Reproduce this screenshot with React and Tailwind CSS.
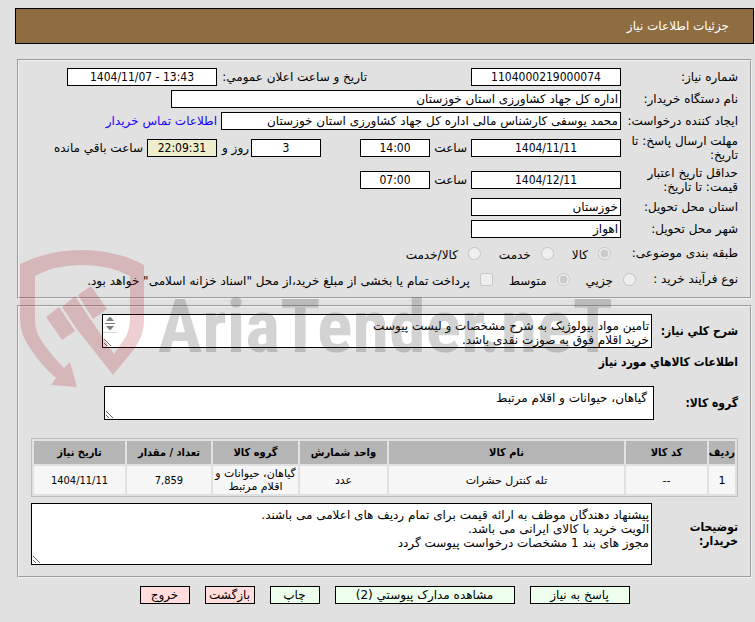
import { useState } from 'react';
import clsx from 'clsx';

const ITEMS = [
  {
    row: '1',
    code: '--',
    name: 'تله کنترل حشرات',
    unit: 'عدد',
    group: 'گیاهان، حیوانات و اقلام مرتبط',
    amount: '7,859',
    date: '1404/11/11',
  },
];

const DESCRIPTION = 'تامین مواد بیولوژیک به شرح مشخصات و لیست پیوست\nخرید اقلام فوق به صوزت نقدی باشد.';

const BUYER_NOTES =
  'پیشنهاد دهندگان موظف به ارائه قیمت برای تمام ردیف های اعلامی می باشند.\nالویت خرید با کالای ایرانی می باشد.\nمجوز های بند 1 مشخصات درخواست پیوست گردد';

function Row({ label, htmlFor, tall, children }) {
  return (
    <div className={clsx('flex items-center', tall ? 'min-h-8' : 'min-h-[22px]')}>
      <label htmlFor={htmlFor} className="w-[117px] shrink-0">
        {label}
      </label>
      {children}
    </div>
  );
}

function Field({ className, numeric, ...props }) {
  return (
    <input
      type="text"
      readOnly
      className={clsx(
        'h-[18px] min-w-0 border border-black px-0.5',
        numeric && "text-center font-['DejaVu_Sans_Condensed','DejaVu_Sans',sans-serif]",
        className
      )}
      {...props}
    />
  );
}

function Choice({ label, type = 'radio', ...props }) {
  return (
    <label className="flex items-center gap-2.5">
      <input type={type} disabled className="m-0 size-[13px]" {...props} />
      <span className="pt-1">{label}</span>
    </label>
  );
}

function Panel({ children, className }) {
  return (
    <fieldset className={clsx('mx-0.5 min-w-0 border-2 border-[#f0f0f0] [border-style:groove]', className)}>
      {children}
    </fieldset>
  );
}

function Watermark() {
  return (
    <div dir="ltr" aria-hidden="true" className="pointer-events-none absolute top-[250px] left-5 flex opacity-20">
      <svg width="126" height="138" viewBox="20 250 126 138" fill="#af141e">
        <path d="M20 264Q48 250 82 250Q116 250 144 265V320Q144 335 135 348L113 375L76 328L62 307L75 296L91 320L114 354L125 338Q130 330 130 318V276Q110 265 82 265Q54 265 35 276V320Q35 332 43 343Q52 356 64 368L70 362L77 387L51 385L56 378Q40 364 30 348Q20 334 20 320Z" />
        <path d="M46 317L59 307L75 331L62 340Z" />
        <path d="M78 295L91 286L107 309L93 319Z" />
      </svg>
      <span className="pt-8 pl-3 font-['Roboto_Condensed','Roboto',sans-serif] text-[74px] leading-[90px] font-bold text-[#282828]">
        AriaTender.neT
      </span>
    </div>
  );
}

export default function App() {
  const [description, setDescription] = useState(DESCRIPTION);
  const [group, setGroup] = useState('گیاهان، حیوانات و اقلام مرتبط');
  const [notes, setNotes] = useState(BUYER_NOTES);

  return (
    <main
      dir="rtl"
      lang="fa"
      className="relative min-h-screen bg-[#e1e1e1] pt-2 pr-px pl-[15px] font-['DejaVu_Sans',sans-serif] text-[12px] leading-[14px] text-black"
    >
      <header className="flex h-9 items-center border border-black bg-[#8f6d40] px-6 text-white">
        <h1>جزئیات اطلاعات نیاز</h1>
      </header>

      <Panel className="mt-[15px] px-3 py-[5px]">
        <Row label="شماره نیاز:" htmlFor="need-no">
          <Field id="need-no" numeric defaultValue="1104000219000074" className="w-[150px] bg-white" />
          <label htmlFor="announce" className="mr-[104px] w-[150px] shrink-0 whitespace-nowrap">
            تاریخ و ساعت اعلان عمومي:
          </label>
          <Field id="announce" numeric dir="ltr" defaultValue="1404/11/07 - 13:43" className="w-[150px] bg-white" />
        </Row>
        <Row label="نام دستگاه خریدار:" htmlFor="buyer">
          <Field id="buyer" defaultValue="اداره کل جهاد کشاورزی استان خوزستان" className="w-[450px] bg-white" />
        </Row>
        <Row label="ایجاد کننده درخواست:" htmlFor="creator">
          <Field
            id="creator"
            defaultValue="محمد یوسفی کارشناس مالی اداره کل جهاد کشاورزی استان خوزستان"
            className="w-[400px] bg-white"
          />
          <a href="#contact" className="mr-1 whitespace-nowrap text-[#1a00ff]">
            اطلاعات تماس خریدار
          </a>
        </Row>
        <Row label="مهلت ارسال پاسخ: تا تاریخ:" htmlFor="deadline" tall>
          <Field id="deadline" numeric defaultValue="1404/11/11" className="w-[150px] bg-white" />
          <label htmlFor="deadline-time" className="w-[41px] shrink-0 pr-1">
            ساعت
          </label>
          <Field id="deadline-time" numeric defaultValue="14:00" className="w-[70px] bg-white" />
          <Field aria-label="روز" id="days" numeric defaultValue="3" className="mr-[39px] w-[70px] bg-white" />
          <label htmlFor="days" className="w-[34px] shrink-0 pr-0.5 whitespace-nowrap">
            روز و
          </label>
          <Field id="remaining" numeric defaultValue="22:09:31" className="w-[70px] bg-[#eeeecc]" />
          <label htmlFor="remaining" className="mr-1 whitespace-nowrap">
            ساعت باقي مانده
          </label>
        </Row>
        <Row label="حداقل تاریخ اعتبار قیمت: تا تاریخ:" htmlFor="validity" tall>
          <Field id="validity" numeric defaultValue="1404/12/11" className="w-[150px] bg-white" />
          <label htmlFor="validity-time" className="w-[41px] shrink-0 pr-1">
            ساعت
          </label>
          <Field id="validity-time" numeric defaultValue="07:00" className="w-[70px] bg-white" />
        </Row>
        <Row label="استان محل تحویل:" htmlFor="province">
          <Field id="province" defaultValue="خوزستان" className="w-[150px] bg-white" />
        </Row>
        <Row label="شهر محل تحویل:" htmlFor="city">
          <Field id="city" defaultValue="اهواز" className="w-[150px] bg-white" />
        </Row>
        <div className="flex h-[26px] items-center">
          <span className="w-[127px] shrink-0">طبقه بندی موضوعی:</span>
          <div className="flex gap-[18px]">
            <Choice name="category" label="کالا" defaultChecked />
            <Choice name="category" label="خدمت" />
            <Choice name="category" label="کالا/خدمت" />
          </div>
        </div>
        <div className="flex h-[26px] items-center">
          <span className="w-[102px] shrink-0">نوع فرآیند خرید :</span>
          <div className="flex gap-4 whitespace-nowrap">
            <Choice name="process" label="جزیي" />
            <Choice name="process" label="متوسط" defaultChecked />
            <Choice type="checkbox" label={'پرداخت تمام یا بخشی از مبلغ خرید،از محل "اسناد خزانه اسلامی" خواهد بود.'} />
          </div>
        </div>
      </Panel>

      <Panel className="mt-1.5 px-3 pt-[7px] pb-[11px]">
        <div className="flex items-center">
          <label
            htmlFor="description"
            className="w-[86px] shrink-0 font-['DejaVu_Sans_Condensed',sans-serif] font-bold whitespace-nowrap"
          >
            شرح کلي نیاز:
          </label>
          <div className="relative w-[550px]">
            <textarea
              id="description"
              value={description}
              onChange={(e) => setDescription(e.target.value)}
              className="block h-[34px] w-full resize overflow-hidden border border-black bg-white px-0.5 py-1"
            />
            <svg className="absolute top-px left-px" width="14" height="18" viewBox="0 0 14 18">
              <rect width="14" height="18" fill="#fafafa" />
              <path d="M7 1.500L11 6H3ZM7 15.500L11 11H3Z" fill="#7d7d7d" />
              <path d="M2 8.500H12" stroke="#7d7d7d" />
              <path d="M0 17.500H14" stroke="#d4d4d4" />
            </svg>
          </div>
        </div>

        <h2 className="mt-[7px] font-['DejaVu_Sans_Condensed',sans-serif] font-bold">اطلاعات کالاهاي مورد نیاز</h2>

        <div className="mt-[17px] flex items-center">
          <label htmlFor="group" className="w-[84px] shrink-0 font-['DejaVu_Sans_Condensed',sans-serif] font-bold">
            گروه کالا:
          </label>
          <textarea
            id="group"
            value={group}
            onChange={(e) => setGroup(e.target.value)}
            className="block h-[34px] w-[550px] resize overflow-hidden border border-black bg-white px-1.5 py-1"
          />
        </div>

        <table className="mt-[18px] w-full table-fixed border-separate border-spacing-0.5 border border-[#bfbfbf] text-center text-[11px] leading-[13px]">
          <thead className="font-['DejaVu_Sans_Condensed',sans-serif]">
            <tr className="h-[23px] bg-[#b5b5b5]">
              <th className="w-[26px] whitespace-nowrap">ردیف</th>
              <th className="w-[81px]">کد کالا</th>
              <th>نام کالا</th>
              <th className="w-[87px]">واحد شمارش</th>
              <th className="w-[85px]">گروه کالا</th>
              <th className="w-[84px]">تعداد / مقدار</th>
              <th className="w-[91px]">تاریخ نیاز</th>
            </tr>
          </thead>
          <tbody>
            {ITEMS.map((item) => (
              <tr key={item.row} className="h-7 bg-[#f7f7f7]">
                <td>{item.row}</td>
                <td>{item.code}</td>
                <td>{item.name}</td>
                <td>{item.unit}</td>
                <td>{item.group}</td>
                <td className="font-['DejaVu_Sans_Condensed',sans-serif]">{item.amount}</td>
                <td className="font-['DejaVu_Sans_Condensed',sans-serif]">{item.date}</td>
              </tr>
            ))}
          </tbody>
        </table>

        <div className="mt-1.5 flex items-center">
          <label htmlFor="notes" className="w-[86px] shrink-0 pl-5 font-['DejaVu_Sans_Condensed',sans-serif] font-bold">
            توضیحات خریدار:
          </label>
          <textarea
            id="notes"
            value={notes}
            onChange={(e) => setNotes(e.target.value)}
            className="block h-[62px] min-w-0 flex-1 resize overflow-hidden border border-black bg-white px-0.5 py-1"
          />
        </div>
      </Panel>

      <div className="flex justify-center gap-[15px] py-2">
        <button type="button" className="h-[18px] w-[100px] border border-black bg-[#eeffee]">
          پاسخ به نیاز
        </button>
        <button type="button" className="h-[18px] w-[180px] border border-black bg-[#eeffee]">
          مشاهده مدارک پیوستي (2)
        </button>
        <button type="button" className="h-[18px] w-[50px] border border-black bg-[#eeffee]">
          چاپ
        </button>
        <button type="button" className="h-[18px] w-[50px] border border-black bg-[#ffdddd]">
          بازگشت
        </button>
        <button type="button" className="h-[18px] w-[50px] border border-black bg-[#ffdddd]">
          خروج
        </button>
      </div>

      <Watermark />
    </main>
  );
}
